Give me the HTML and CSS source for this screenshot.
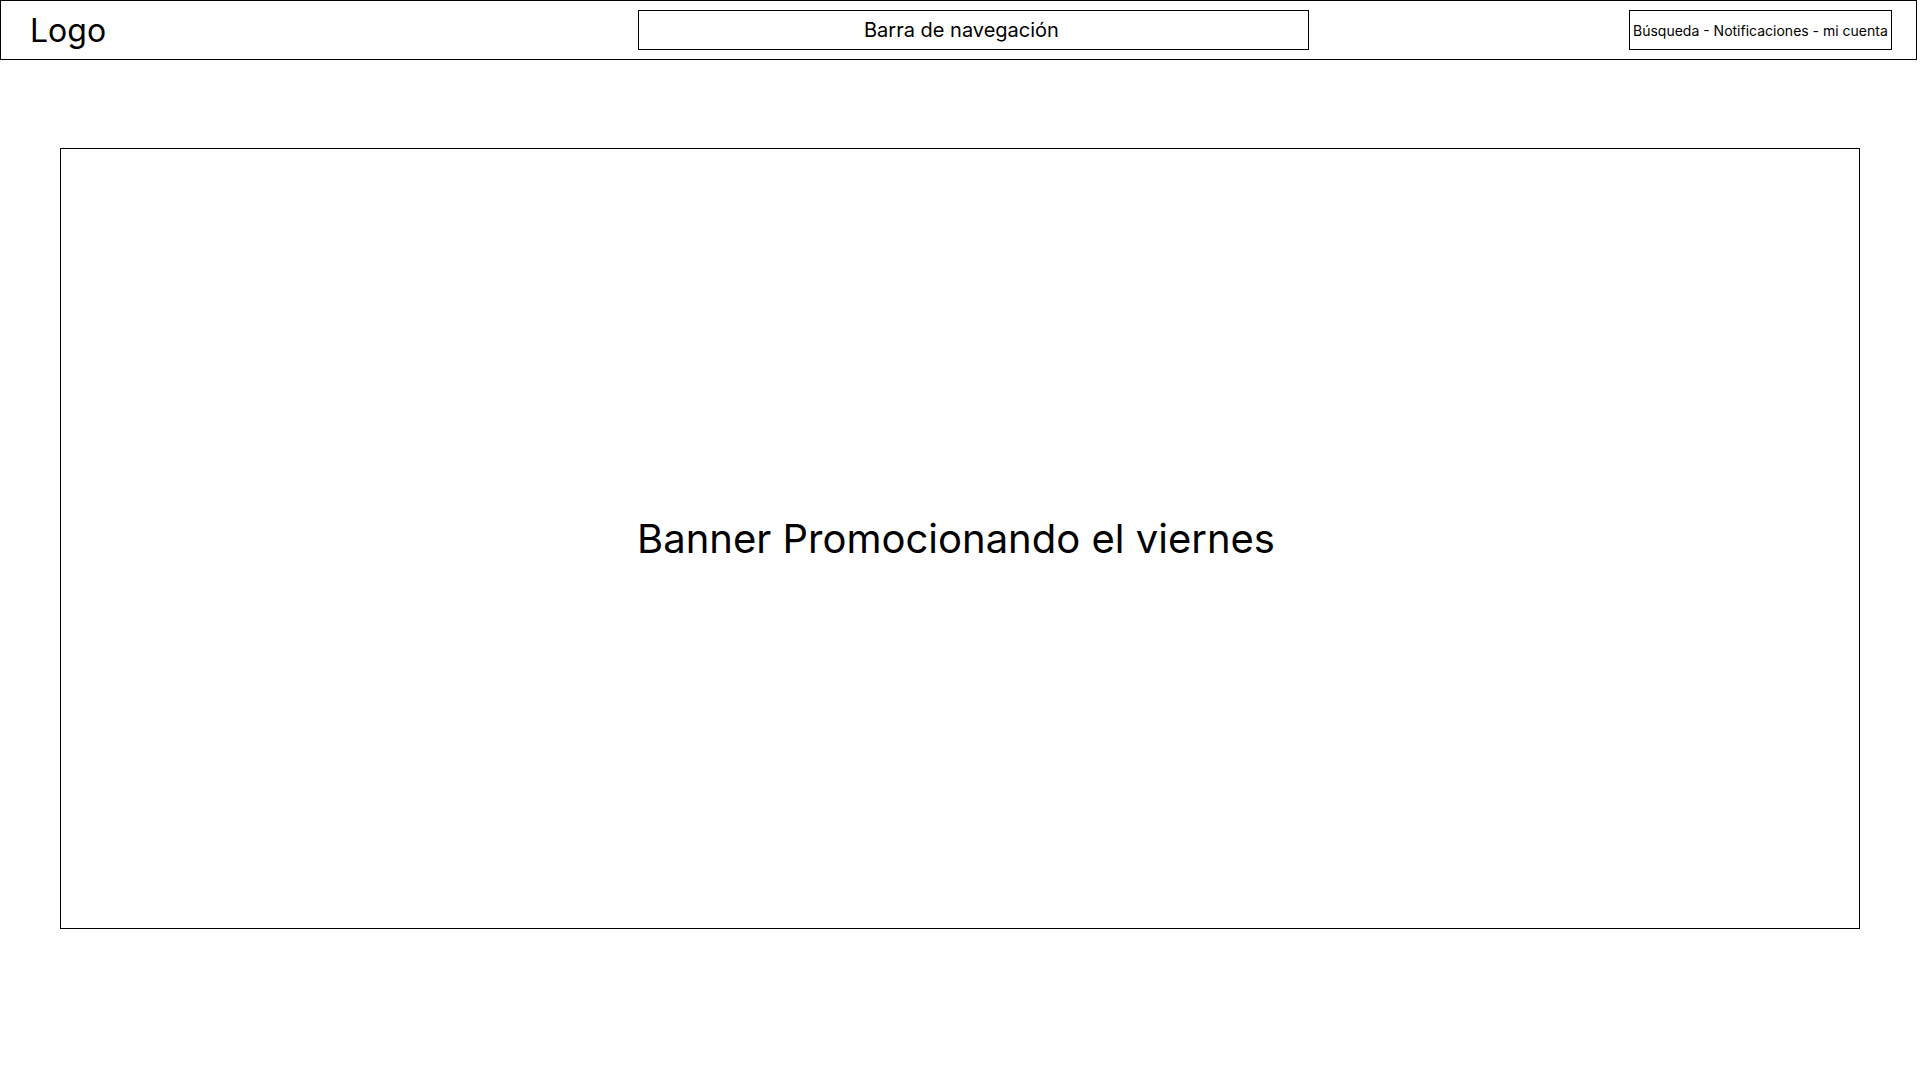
FILE: index.html
```html
<!DOCTYPE html>
<html>

<head>
  <title>Inicio</title>
  <meta name="viewport" content="width=device-width, initial-scale=1.0">
  <link rel="stylesheet" href="styles.css">
</head>

<body>
  <header class="top-bar">
    <div class="logo">Logo</div>
    <nav class="nav-bar">Barra de navegación</nav>
    <div class="user-tools">Búsqueda - Notificaciones - mi cuenta</div>
  </header>

  <section class="banner">
    <h1>Banner Promocionando el viernes</h1>
  </section>
</body>

</html>
```

FILE: styles.css
```css
body {
  font-family: 'Inter', sans-serif;
  background: #fff;
  color: #000;
  margin: 0;
  padding: 0;
}

.top-bar {
  display: flex;
  align-items: center;
  width: 1917px;
  height: 60px;
  border: 1px solid #000;
  box-sizing: border-box;
}

.logo {
  width: 637px;
  padding-left: 29px;
  box-sizing: border-box;
  font-size: 32px;
}

.nav-bar {
  width: 671px;
  height: 40px;
  border: 1px solid #000;
  box-sizing: border-box;
  display: flex;
  align-items: center;
  padding-left: 225px;
  font-size: 20px;
}

.user-tools {
  margin-left: auto;
  margin-right: 24px;
  width: 263px;
  height: 40px;
  border: 1px solid #000;
  box-sizing: border-box;
  display: flex;
  align-items: center;
  padding-left: 3px;
  font-size: 14px;
  white-space: nowrap;
}

.banner {
  margin: 88px 0 0 60px;
  width: 1800px;
  height: 781px;
  border: 1px solid #000;
  box-sizing: border-box;
  display: flex;
  align-items: center;
  padding-left: 576px;
}

.banner h1 {
  margin: 0;
  font-size: 40px;
  font-weight: normal;
}
```
